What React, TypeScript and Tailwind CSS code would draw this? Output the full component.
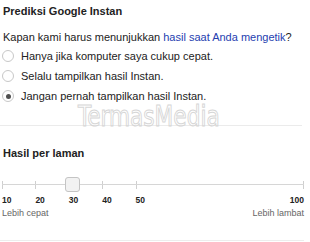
const OPTIONS = [
  { label: "Hanya jika komputer saya cukup cepat.", checked: false },
  { label: "Selalu tampilkan hasil Instan.", checked: false },
  { label: "Jangan pernah tampilkan hasil Instan.", checked: true },
];

// labelled stops on the slider; "100" sits on its own at the far end
const STEPS = ["10", "20", "30", "40", "50"];

function Radio({ checked }: { checked: boolean }) {
  return (
    <span className="flex h-[12px] w-[12px] shrink-0 items-center justify-center rounded-full border border-[#c8c8c8] bg-white">
      {checked && <span className="h-[5px] w-[5px] rounded-full bg-[#505050]" />}
    </span>
  );
}

export default function App() {
  return (
    <div className="relative flex h-[242px] w-[310px] flex-col overflow-hidden bg-white font-['Liberation_Sans',Arial,sans-serif] text-[#222]">
      <section className="flex flex-col px-[3px] pt-[4px]">
        <h2 className="text-[11px] font-bold leading-[14px]">Prediksi Google Instan</h2>
        <p className="mt-[12px] text-[11px] leading-[14px]">
          Kapan kami harus menunjukkan <span className="text-[#2540b0]">hasil saat Anda mengetik</span>?
        </p>
        <div className="mt-[2px] flex flex-col">
          {OPTIONS.map((o) => (
            <label key={o.label} className="flex h-[20px] items-center gap-[7px] -ml-[1px] text-[11px]">
              <Radio checked={o.checked} />
              <span>{o.label}</span>
            </label>
          ))}
        </div>
      </section>

      <div className="mt-[19px] h-px w-[302px] bg-[#ebebeb]" />

      <section className="flex w-[306px] flex-col px-[2px] pt-[20px]">
        <h2 className="px-[1px] text-[11px] font-bold leading-[14px]">Hasil per laman</h2>

        <div className="relative mt-[17px] h-[16px]">
          <div className="absolute left-0 right-0 top-[7px] h-px bg-[#d6d6d6]" />
          <div className="flex h-full items-center">
            {STEPS.map((s) => (
              <span key={s} className="flex w-[33.4px] shrink-0">
                <span className="h-[8px] w-px bg-[#cfcfcf]" />
              </span>
            ))}
            <span className="ml-auto h-[8px] w-px bg-[#cfcfcf]" />
          </div>
          <div className="absolute left-[63px] top-0 h-[15px] w-[15px] rounded-[3px] border border-[#c4c4c4] bg-[#f2f2f2]" />
        </div>

        <div className="mt-[2px] flex text-[8.5px] font-bold leading-[10px] text-[#222]">
          {STEPS.map((s) => (
            <span key={s} className="w-[33.4px] shrink-0">
              {s}
            </span>
          ))}
          <span className="ml-auto">100</span>
        </div>
        <div className="mt-[2px] flex justify-between text-[9px] leading-[12px] text-[#666]">
          <span>Lebih cepat</span>
          <span>Lebih lambat</span>
        </div>
      </section>

      <div className="mt-auto mb-[1px] h-px w-[304px] bg-[#ededed]" />

      <div className="pointer-events-none absolute left-[78px] top-[107px] origin-left scale-x-[0.86] select-none text-[28px] leading-[20px] text-transparent [-webkit-text-stroke:1px_#d6d6d6] [font-family:'DejaVu_Sans_Condensed','Liberation_Sans_Narrow',sans-serif]">
        TermasMedia
      </div>
    </div>
  );
}
